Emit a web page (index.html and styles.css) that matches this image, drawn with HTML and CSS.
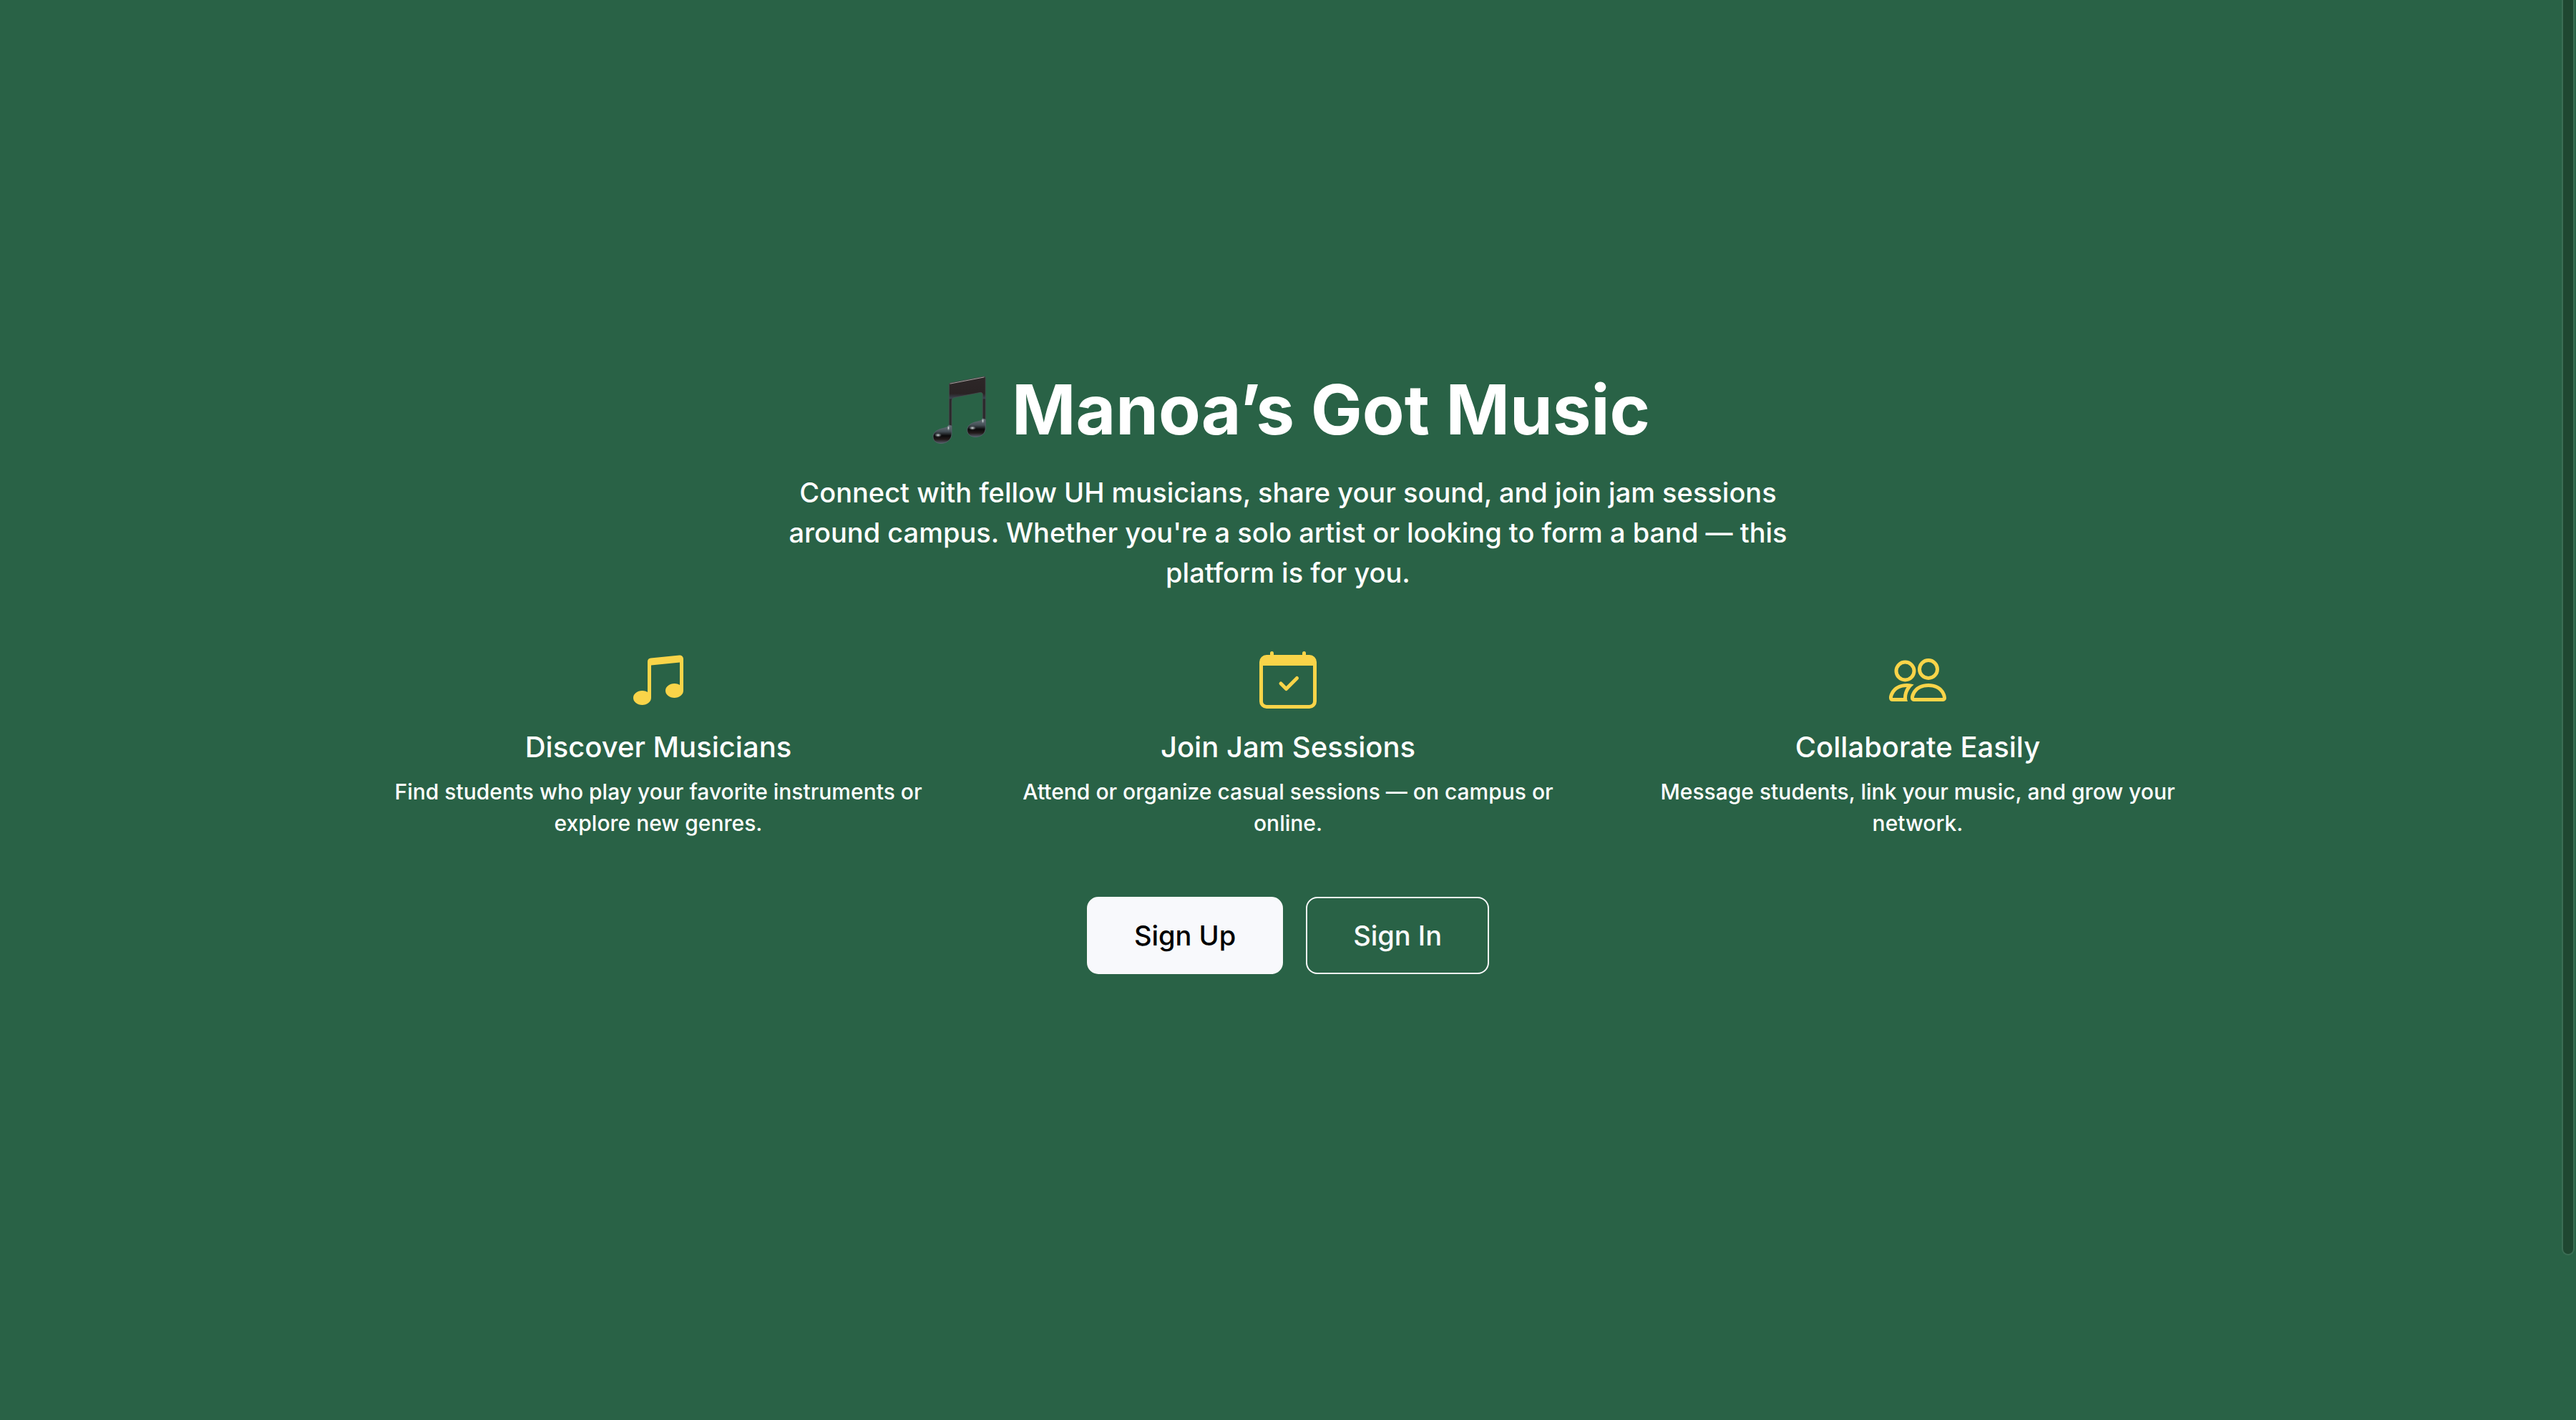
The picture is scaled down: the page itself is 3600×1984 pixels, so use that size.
FILE: index.html
```html
<!DOCTYPE html>
<html lang="en">
<head>
<meta charset="utf-8">
<meta name="viewport" content="width=device-width, initial-scale=1">
<title>Manoa’s Got Music</title>
<link rel="stylesheet" href="styles.css">
</head>
<body>
<main class="landing">
  <h1 class="title">
    <svg class="title-note" viewBox="12 0 88 140" aria-hidden="true">
      <defs>
        <linearGradient id="beam" x1="0" y1="24" x2="0" y2="56" gradientUnits="userSpaceOnUse">
          <stop offset="0" stop-color="#2d2728"/><stop offset=".75" stop-color="#2a2324"/><stop offset=".95" stop-color="#3b4450"/><stop offset="1" stop-color="#2b282b"/>
        </linearGradient>
        <linearGradient id="head" x1="0" y1="0" x2="0" y2="1">
          <stop offset="0" stop-color="#69747b"/><stop offset=".35" stop-color="#454f56"/><stop offset=".58" stop-color="#0b0a0b"/><stop offset=".78" stop-color="#231a1a"/><stop offset="1" stop-color="#565e6c"/>
        </linearGradient>
        <radialGradient id="shine">
          <stop offset="0" stop-color="#e3e9ea"/><stop offset="1" stop-color="#8f9a9f" stop-opacity="0"/>
        </radialGradient>
      </defs>
      <path fill="url(#beam)" stroke="#4a4c52" stroke-width=".7" d="M44.500 34.500 Q44.500 33.500 46 33 L93 24 Q95.200 23.700 95.200 26 L95.200 90 H91.300 V49 Q91 45.500 87 46.500 L51 53.500 Q48 54.500 48 58 V98 H44.300 Z"/>
      <path fill="none" stroke="#b7b0ad" stroke-width=".9" d="M45.500 34.200 L93.500 24.900"/>
      <path fill="url(#head)" stroke="#59636d" stroke-width=".8" d="M44.300 92 Q43 95 36 96.500 C26 98.500 22 103 22 108 C22 114 27 117.500 33 117.500 C41 117.500 48 112 48 104 V93 Z"/>
      <path fill="url(#head)" stroke="#59636d" stroke-width=".8" d="M91.300 83 Q90 86 84 87 C74 89 69.700 93 69.700 99 C69.700 105 75 108.500 81 108.500 C89 108.500 95.200 104 95.200 96 V84 Z"/>
      <ellipse cx="29" cy="106" rx="5" ry="3" fill="url(#shine)"/>
      <ellipse cx="77" cy="96" rx="5" ry="3" fill="url(#shine)"/>
      <ellipse cx="43.500" cy="96" rx="2" ry="4" fill="url(#shine)"/>
      <ellipse cx="91.500" cy="86" rx="2" ry="4" fill="url(#shine)"/>
    </svg>
    <span>Manoa’s Got Music</span>
  </h1>
  <p class="lead">Connect with fellow UH musicians, share your sound, and join jam sessions around campus. Whether you're a solo artist or looking to form a band — this platform is for you.</p>

  <div class="features">
    <section class="feature">
      <svg class="icon" viewBox="0 0 16 16" aria-hidden="true"><path d="M6 13c0 1.105-1.120 2-2.500 2S1 14.105 1 13s1.120-2 2.500-2 2.500.896 2.500 2m9-2c0 1.105-1.120 2-2.500 2s-2.500-.895-2.500-2 1.120-2 2.500-2 2.500.895 2.500 2"/><path d="M14 11V2h1v9zM6 3v10H5V3z"/><path d="M5 2.905a1 1 0 0 1 .9-.995l8-.8a1 1 0 0 1 1.100.995V3L5 4z"/></svg>
      <h2 class="feature-title">Discover Musicians</h2>
      <p class="feature-text">Find students who play your favorite instruments or explore new genres.</p>
    </section>
    <section class="feature">
      <svg class="icon" viewBox="0 0 16 16" aria-hidden="true"><path d="M10.854 7.146a.5.5 0 0 1 0 .708l-3 3a.5.5 0 0 1-.708 0l-1.500-1.500a.5.5 0 1 1 .708-.708L7.500 9.793l2.646-2.647a.5.5 0 0 1 .708 0"/><path d="M3.500 0a.5.5 0 0 1 .5.5V1h8V.5a.5.5 0 0 1 1 0V1h1a2 2 0 0 1 2 2v11a2 2 0 0 1-2 2H2a2 2 0 0 1-2-2V3a2 2 0 0 1 2-2h1V.5a.5.5 0 0 1 .5-.5M1 4v10a1 1 0 0 0 1 1h12a1 1 0 0 0 1-1V4z"/></svg>
      <h2 class="feature-title">Join Jam Sessions</h2>
      <p class="feature-text">Attend or organize casual sessions — on campus or online.</p>
    </section>
    <section class="feature">
      <svg class="icon" viewBox="0 0 16 16" aria-hidden="true"><path d="M15 14s1 0 1-1-1-4-5-4-5 3-5 4 1 1 1 1zm-7.978-1L7 12.996c.001-.264.167-1.030.76-1.720C8.312 10.629 9.282 10 11 10c1.717 0 2.687.63 3.240 1.276.593.69.758 1.457.76 1.720l-.008.002-.014.002zM11 7a2 2 0 1 0 0-4 2 2 0 0 0 0 4m3-2a3 3 0 1 1-6 0 3 3 0 0 1 6 0M6.936 9.280a6 6 0 0 0-1.230-.247A7 7 0 0 0 5 9c-4 0-5 3-5 4q0 1 1 1h4.216A2.240 2.240 0 0 1 5 13c0-1.010.377-2.042 1.090-2.904.243-.294.526-.569.846-.816M4.920 10A5.500 5.500 0 0 0 4 13H1c0-.26.164-1.030.76-1.724.545-.636 1.492-1.256 3.160-1.275ZM1.500 5.500a3 3 0 1 1 6 0 3 3 0 0 1-6 0m3-2a2 2 0 1 0 0 4 2 2 0 0 0 0-4"/></svg>
      <h2 class="feature-title">Collaborate Easily</h2>
      <p class="feature-text">Message students, link your music, and grow your network.</p>
    </section>
  </div>

  <div class="actions">
    <button type="button" class="btn btn-light">Sign Up</button>
    <button type="button" class="btn btn-outline">Sign In</button>
  </div>
</main>
<div class="scroll-thumb" aria-hidden="true"></div>
</body>
</html>
```
FILE: styles.css
```css
* {
  box-sizing: border-box;
}

body {
  margin: 0;
  min-height: 100vh;
  background: #296246;
  color: #fff;
  font-family: Inter, "Liberation Sans", sans-serif;
}

.landing {
  display: flex;
  flex-direction: column;
  align-items: center;
  max-width: 2640px;
  margin: 0 auto;
  padding: 514px 0 0;
  text-align: center;
}

.title {
  display: flex;
  align-items: center;
  justify-content: center;
  gap: 32px;
  margin: 0 0 30px;
  font-size: 96px;
  font-weight: 700;
  line-height: 116px;
}

.title-note {
  width: 88px;
  height: 140px;
  margin: -12px 0;
}

.lead {
  max-width: 1400px;
  margin: 0 0 82px;
  font-size: 38px;
  font-weight: 500;
  line-height: 56px;
}

.features {
  display: grid;
  grid-template-columns: repeat(3, 1fr);
  width: 100%;
  margin-bottom: 81px;
}

.feature {
  padding: 0 48px;
}

.icon {
  display: block;
  width: 80px;
  height: 80px;
  margin: 0 auto 30px;
  fill: #f9d449;
}

.feature-title {
  margin: 0 0 16px;
  font-size: 40px;
  font-weight: 500;
  line-height: 48px;
}

.feature-text {
  margin: 0;
  font-size: 30px;
  font-weight: 500;
  line-height: 44px;
}

.actions {
  display: flex;
  gap: 32px;
}

.btn {
  padding: 24px 64px;
  border: 2px solid #f8f9fa;
  border-radius: 16px;
  font: 500 38px/56px Inter, "Liberation Sans", sans-serif;
  cursor: pointer;
}

.btn-light {
  background: #f8f9fc;
  color: #000;
}

.btn-outline {
  background: transparent;
  color: #f8f9fa;
}

.scroll-thumb {
  position: fixed;
  top: 0;
  right: 2px;
  width: 18px;
  height: 88.4%;
  border: 2px solid #3b6d54;
  border-top: 0;
  border-radius: 0 0 9px 9px;
  background: #1f4731;
}
```
